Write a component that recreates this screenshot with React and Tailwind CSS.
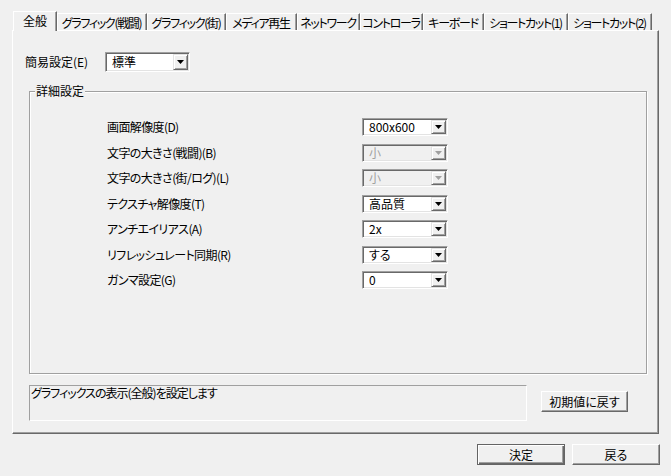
import React from "react";

const FONT = "font-['Noto_Sans_CJK_JP',sans-serif]";

function Arrow({ disabled }) {
  return (
    <svg width="7" height="4" viewBox="0 0 7 4" className="block">
      <path d="M0 0H7L3.5 4Z" fill={disabled ? "#a0a0a0" : "#000"} />
    </svg>
  );
}

function Combo({ value, disabled, big }) {
  const box = big ? "h-[20px] w-[85px]" : "h-[18px] w-[86px]";
  const bg = disabled ? "bg-[#f0f0f0] text-[#a0a0a0]" : "bg-white text-black";
  return (
    <div
      className={`${box} ${bg} flex items-stretch border border-t-[#a0a0a0] border-l-[#a0a0a0] border-r-white border-b-white shadow-[inset_1px_1px_0_#696969,inset_-1px_-1px_0_#e3e3e3] p-[1px]`}
    >
      <div className="flex-1 flex items-center pl-[5px] leading-none whitespace-nowrap">{value}</div>
      <div className="w-[15px] bg-[#f0f0f0] flex items-center justify-center border border-t-[#e3e3e3] border-l-[#e3e3e3] border-r-[#696969] border-b-[#696969] shadow-[inset_1px_1px_0_#fff,inset_-1px_-1px_0_#a0a0a0]">
        <Arrow disabled={disabled} />
      </div>
    </div>
  );
}

function Button({ children, cls, def }) {
  return (
    <div
      className={`${cls} flex items-center justify-center bg-[#f0f0f0] leading-none ${
        def
          ? "border border-[#646464] shadow-[inset_1px_1px_0_#fff,inset_-1px_-1px_0_#696969,inset_-2px_-2px_0_#a0a0a0]"
          : "border border-t-white border-l-white border-r-[#696969] border-b-[#696969] shadow-[inset_-1px_-1px_0_#a0a0a0]"
      }`}
    >
      {children}
    </div>
  );
}

const tabs = [
  { label: "グラフィック(戦闘)", w: "w-[90px]" },
  { label: "グラフィック(街)", w: "w-[79px]" },
  { label: "メディア再生", w: "w-[71px]" },
  { label: "ネットワーク", w: "w-[63px]" },
  { label: "コントローラ", w: "w-[63px]" },
  { label: "キーボード", w: "w-[61px]" },
  { label: "ショートカット(1)", w: "w-[84px]" },
  { label: "ショートカット(2)", w: "w-[84px]" },
];

const rows = [
  { label: "画面解像度(D)", value: "800x600" },
  { label: "文字の大きさ(戦闘)(B)", value: "小", disabled: true },
  { label: "文字の大きさ(街/ログ)(L)", value: "小", disabled: true },
  { label: "テクスチャ解像度(T)", value: "高品質" },
  { label: "アンチエイリアス(A)", value: "2x" },
  { label: "リフレッシュレート同期(R)", value: "する" },
  { label: "ガンマ設定(G)", value: "0" },
];

export default function App() {
  return (
    <div
      className={`w-[671px] h-[476px] bg-[#f0f0f0] text-black text-[12px] ${FONT} [font-feature-settings:'palt'] pt-[11px] pl-[12px] overflow-hidden`}
    >
      {/* Tab strip */}
      <div className="flex items-end h-[19px] pl-[1px]">
        <div className="relative z-10 w-[44px] h-[20px] -mb-[1px] bg-[#f0f0f0] border-t border-l border-white border-r border-r-[#696969] shadow-[inset_-1px_0_0_#a0a0a0] flex items-start justify-center pt-[3px] leading-none">
          全般
        </div>
        {tabs.map((t) => (
          <div
            key={t.label}
            className={`${t.w} h-[17px] border-t border-white border-r border-r-[#696969] shadow-[inset_-1px_0_0_#a0a0a0,inset_1px_0_0_#fff] flex items-center justify-center leading-none whitespace-nowrap pt-[1px] tracking-[-1.3px]`}
          >
            {t.label}
          </div>
        ))}
      </div>

      {/* Panel */}
      <div className="w-[647px] h-[404px] border border-t-white border-l-white border-r-[#696969] border-b-[#696969] shadow-[inset_-1px_-1px_0_#a0a0a0]">
        <div className="flex items-center pt-[21px] pl-[12px]">
          <div className="w-[80px] leading-none">簡易設定(E)</div>
          <Combo value="標準" big />
        </div>

        {/* Group box */}
        <div className="relative mt-[19px] ml-[16px] w-[618px] h-[283px] border border-[#a0a0a0] shadow-[inset_1px_1px_0_#fff,1px_1px_0_#fff]">
          <div className="absolute left-[5px] -top-[7px] bg-[#f0f0f0] px-[1px] leading-none">詳細設定</div>
          <div className="flex flex-col gap-[7.5px] pt-[26px] pl-[77px]">
            {rows.map((r) => (
              <div key={r.label} className="flex items-center">
                <div className="w-[255px] leading-none whitespace-nowrap tracking-[-0.6px]">{r.label}</div>
                <Combo value={r.value} disabled={r.disabled} />
              </div>
            ))}
          </div>
        </div>

        {/* Bottom of panel */}
        <div className="flex items-start mt-[11px] ml-[16px]">
          <div className="w-[498px] h-[36px] border border-t-[#a0a0a0] border-l-[#a0a0a0] border-r-white border-b-white pl-[1px] pt-[1px] leading-none whitespace-nowrap tracking-[-1px]">
            グラフィックスの表示(全般)を設定します
          </div>
          <Button cls="ml-[14px] mt-[6px] w-[87px] h-[21px]">初期値に戻す</Button>
        </div>
      </div>

      {/* Dialog buttons */}
      <div className="flex justify-end gap-[7px] mt-[10px] pr-[11px]">
        <Button cls="w-[88px] h-[21px]" def>
          決定
        </Button>
        <Button cls="w-[88px] h-[21px]">戻る</Button>
      </div>
    </div>
  );
}
